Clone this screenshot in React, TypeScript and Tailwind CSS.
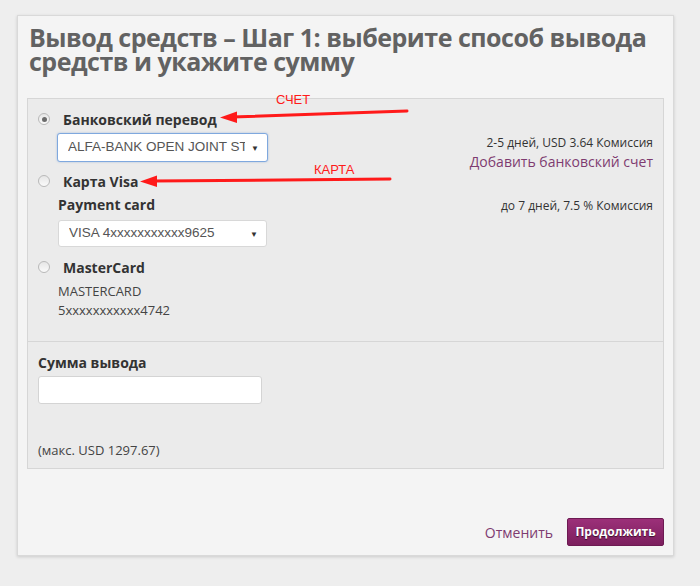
import React from 'react';

function Radio({ checked }: { checked?: boolean }) {
  return (
    <span className="flex h-[12px] w-[12px] shrink-0 items-center justify-center rounded-full border border-[#b9b9b9] bg-gradient-to-b from-[#e6e6e6] to-[#fafafa]">
      {checked && <span className="h-[5px] w-[5px] rounded-full bg-[#6b6b6b]" />}
    </span>
  );
}

function FakeSelect({ value, focused, className }: { value: string; focused?: boolean; className: string }) {
  return (
    <div
      className={
        'flex items-center rounded-[3px] bg-white pl-[10px] ' +
        (focused ? 'border border-[#7fa8de] shadow-[0_0_2px_rgba(90,140,210,0.5)] ' : 'border border-[#d8d8d8] ') +
        className
      }
    >
      <span className="flex-1 overflow-hidden whitespace-nowrap font-['Liberation_Sans',Arial,sans-serif] text-[13.5px] text-[#555]">
        {value}
      </span>
      <span className="w-[22px] shrink-0 pr-[2px] text-center text-[8px] text-[#333]">▼</span>
    </div>
  );
}

export default function App() {
  return (
    <div className="relative min-h-[586px] w-[700px] bg-[#eeeeee] pt-[15px] pl-[17px] font-['Open_Sans',sans-serif]">
      <div className="w-[657px] h-[541px] flex flex-col border border-[#d9d9d9] bg-[#f4f4f4] px-[9px] shadow-[0_1px_3px_rgba(0,0,0,0.15)]">
        <h1 className="mt-[9px] ml-[2px] text-[25px] font-bold leading-[24px] tracking-[-0.5px] text-[#626262]">
          Вывод средств – Шаг 1: выберите способ вывода средств и укажите сумму
        </h1>

        <div className="mt-[25px] border border-[#d6d6d6] bg-[#ebebeb]">
          {/* payment methods */}
          <div className="h-[242px] px-[10px] pt-[9px]">
            <div className="flex h-[54px] justify-between">
              <div>
                <div className="flex h-[22px] items-center gap-[13px]">
                  <Radio checked />
                  <span className="text-[14px] font-bold text-[#333]">Банковский перевод</span>
                </div>
                <FakeSelect
                  value="ALFA-BANK OPEN JOINT STOCK COMPANY"
                  focused
                  className="mt-[3px] ml-[19px] h-[29px] w-[211px]"
                />
              </div>
              <div className="pt-[26px] text-right">
                <div className="text-[12px] leading-[18px] text-[#333]">2-5 дней, USD 3.64 Комиссия</div>
                <div className="text-[14px] leading-[20px] text-[#7e3b70]">Добавить банковский счет</div>
              </div>
            </div>

            <div className="mt-[8px] flex justify-between">
              <div>
                <div className="flex h-[22px] items-center gap-[13px]">
                  <Radio />
                  <span className="text-[14px] font-bold text-[#333]">Карта Visa</span>
                </div>
                <div className="mt-[3px] ml-[20px] text-[14px] font-bold leading-[20px] text-[#333]">Payment card</div>
                <FakeSelect value="VISA 4xxxxxxxxxxx9625" className="mt-[5px] ml-[20px] h-[27px] w-[209px]" />
              </div>
              <div className="pt-[27px] text-right text-[12px] leading-[18px] text-[#333]">до 7 дней, 7.5 % Комиссия</div>
            </div>

            <div className="mt-[9px]">
              <div className="flex h-[22px] items-center gap-[13px]">
                <Radio />
                <span className="text-[14px] font-bold text-[#333]">MasterCard</span>
              </div>
              <div className="mt-[4px] ml-[20px] text-[13px] leading-[19px] text-[#444]">
                <div>MASTERCARD</div>
                <div>5xxxxxxxxxxx4742</div>
              </div>
            </div>
          </div>

          {/* amount */}
          <div className="h-[127px] border-t border-[#d6d6d6] px-[10px] pt-[11px]">
            <div className="text-[14px] font-bold leading-[20px] text-[#333]">Сумма вывода</div>
            <input className="mt-[3px] block h-[28px] w-[224px] rounded-[3px] border border-[#d4d4d4] bg-white" />
            <div className="mt-[37px] text-[13px] leading-[18px] text-[#444]">(макс. USD 1297.67)</div>
          </div>
        </div>

        <div className="mt-auto mb-[9px] flex items-center justify-end gap-[14px]">
          <span className="text-[14px] text-[#7e3b70]">Отменить</span>
          <button className="h-[28px] w-[97px] rounded-[2px] border border-[#6d1a52] bg-gradient-to-b from-[#9c3079] to-[#7c1f5e] text-[12px] font-bold text-white [text-shadow:0_1px_1px_rgba(0,0,0,0.6)]">
            Продолжить
          </button>
        </div>
      </div>

      {/* red annotation arrows */}
      <svg className="pointer-events-none absolute left-0 top-0" width="700" height="586">
        <line x1="407" y1="111" x2="232" y2="117" stroke="#ff1a1a" strokeWidth="3" strokeLinecap="round" />
        <polygon points="220,117.5 237,111.5 237,123" fill="#ff1a1a" />
        <line x1="390" y1="179" x2="152" y2="181" stroke="#ff1a1a" strokeWidth="3" strokeLinecap="round" />
        <polygon points="140,181.5 157,175.5 157,187" fill="#ff1a1a" />
      </svg>
      <span className="absolute left-[276px] top-[92px] font-['Liberation_Sans',Arial,sans-serif] text-[13px] leading-[16px] text-[#ff1a1a]">
        СЧЕТ
      </span>
      <span className="absolute left-[314px] top-[162px] font-['Liberation_Sans',Arial,sans-serif] text-[13px] leading-[16px] text-[#ff1a1a]">
        КАРТА
      </span>
    </div>
  );
}
